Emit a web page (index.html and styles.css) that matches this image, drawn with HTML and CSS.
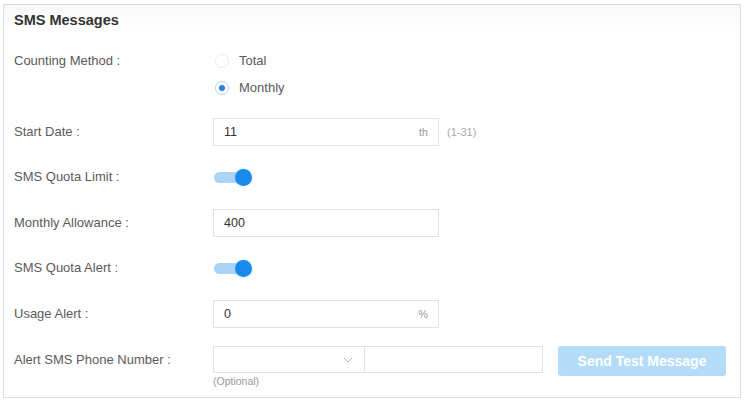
FILE: index.html
```html
<!DOCTYPE html>
<html lang="en">
<head>
    <meta charset="UTF-8">
    <meta name="viewport" content="width=device-width, initial-scale=1.0">
    <title>SMS Messages</title>
    <link rel="stylesheet" href="styles.css">
</head>
<body>

<div class="panel">
    <div class="panel-title">SMS Messages</div>

    <div class="form">
        <div class="label label-top">Counting Method :</div>
        <div class="radios">
            <label class="radio">
                <span class="radio-dot"></span>
                <span>Total</span>
            </label>
            <label class="radio checked">
                <span class="radio-dot"></span>
                <span>Monthly</span>
            </label>
        </div>

        <div class="label">Start Date :</div>
        <div class="field">
            <div class="input">
                <span class="value">11</span>
                <span class="suffix">th</span>
            </div>
            <span class="hint">(1-31)</span>
        </div>

        <div class="label">SMS Quota Limit :</div>
        <div class="field">
            <span class="toggle on"><span class="knob"></span></span>
        </div>

        <div class="label">Monthly Allowance :</div>
        <div class="field">
            <div class="input">
                <span class="value">400</span>
            </div>
        </div>

        <div class="label">SMS Quota Alert :</div>
        <div class="field">
            <span class="toggle on"><span class="knob"></span></span>
        </div>

        <div class="label">Usage Alert :</div>
        <div class="field">
            <div class="input">
                <span class="value">0</span>
                <span class="suffix">%</span>
            </div>
        </div>

        <div class="label">Alert SMS Phone Number :</div>
        <div class="field phone">
            <div class="phone-group">
                <div class="select">
                    <svg width="10" height="6" viewBox="0 0 10 6">
                        <path d="M1 1 L5 5 L9 1" fill="none" stroke="#b8b8b8" stroke-width="1"/>
                    </svg>
                </div>
                <div class="phone-input"></div>
            </div>
            <button class="send-btn" disabled>Send Test Message</button>
            <span class="optional">(Optional)</span>
        </div>
    </div>
</div>

</body>
</html>
```

FILE: styles.css
```css
body {
    margin: 0;
    padding: 0;
    background-color: #fff;
    font-family: "Liberation Sans", Arial, sans-serif;
    color: #5a5a5a;
}

.panel {
    margin: 4px 0 0 3px;
    width: 736px;
    height: 392px;
    border: 1px solid #dcdcdc;
}

.panel-title {
    padding: 4px 10px 0;
    height: 24px;
    line-height: 22px;
    font-size: 14.5px;
    font-weight: bold;
    color: #333;
    background: linear-gradient(#f8f8f8, #fff);
}

.form {
    display: grid;
    grid-template-columns: 199px 1fr;
    row-gap: 17.6px;
    padding: 14px 0 0 10px;
    font-size: 13px;
}

.label {
    height: 28px;
    line-height: 28px;
    color: #5a5a5a;
}

.label-top {
    height: 27px;
    line-height: 27px;
}

.radios {
    display: flex;
    flex-direction: column;
    margin-bottom: -1px;
}

.radio {
    display: flex;
    align-items: center;
    height: 27px;
    gap: 10px;
    color: #5a5a5a;
}

.radio-dot {
    width: 14px;
    height: 14px;
    border: 1px solid #ececec;
    border-radius: 50%;
    margin-left: 2px;
    box-sizing: border-box;
    position: relative;
}

.radio.checked .radio-dot {
    border-color: #b9dcf7;
    box-shadow: 0 0 2px #d6ebfb;
}

.radio.checked .radio-dot::after {
    content: "";
    position: absolute;
    left: 3px;
    top: 3px;
    width: 6px;
    height: 6px;
    border-radius: 50%;
    background-color: #2a7ee0;
}

.field {
    display: flex;
    align-items: center;
    height: 28px;
}

.input {
    display: flex;
    align-items: center;
    justify-content: space-between;
    width: 226px;
    height: 28px;
    box-sizing: border-box;
    border: 1px solid #e2e2e2;
    padding: 0 10px;
    color: #333;
    font-size: 12.5px;
}

.input .suffix {
    color: #999;
    font-size: 11px;
}

.hint {
    margin-left: 8px;
    color: #aaa;
    font-size: 11px;
}

.toggle {
    display: inline-block;
    position: relative;
    width: 36px;
    height: 11px;
    border-radius: 6px;
    background-color: #a9d4f5;
    margin-left: 1px;
}

.toggle .knob {
    position: absolute;
    right: -2px;
    top: -3px;
    width: 17px;
    height: 17px;
    border-radius: 50%;
    background-color: #1a8bea;
    box-shadow: 0 0 2px #9ccff5;
}

.phone {
    position: relative;
}

.phone-group {
    display: flex;
}

.select {
    display: flex;
    align-items: center;
    justify-content: flex-end;
    width: 152px;
    height: 27px;
    box-sizing: border-box;
    border: 1px solid #e2e2e2;
    padding-right: 11px;
}

.phone-input {
    width: 178px;
    height: 27px;
    box-sizing: border-box;
    border: 1px solid #e2e2e2;
    border-left: none;
}

.send-btn {
    margin-left: 15px;
    width: 168px;
    height: 30px;
    margin-top: 3px;
    padding: 0;
    border: none;
    border-radius: 3px;
    background-color: #b4dbf7;
    color: #fff;
    font-family: "Liberation Sans", Arial, sans-serif;
    font-size: 14px;
    font-weight: bold;
}

.optional {
    position: absolute;
    left: 0;
    top: 29px;
    font-size: 10.5px;
    color: #999;
}
```
